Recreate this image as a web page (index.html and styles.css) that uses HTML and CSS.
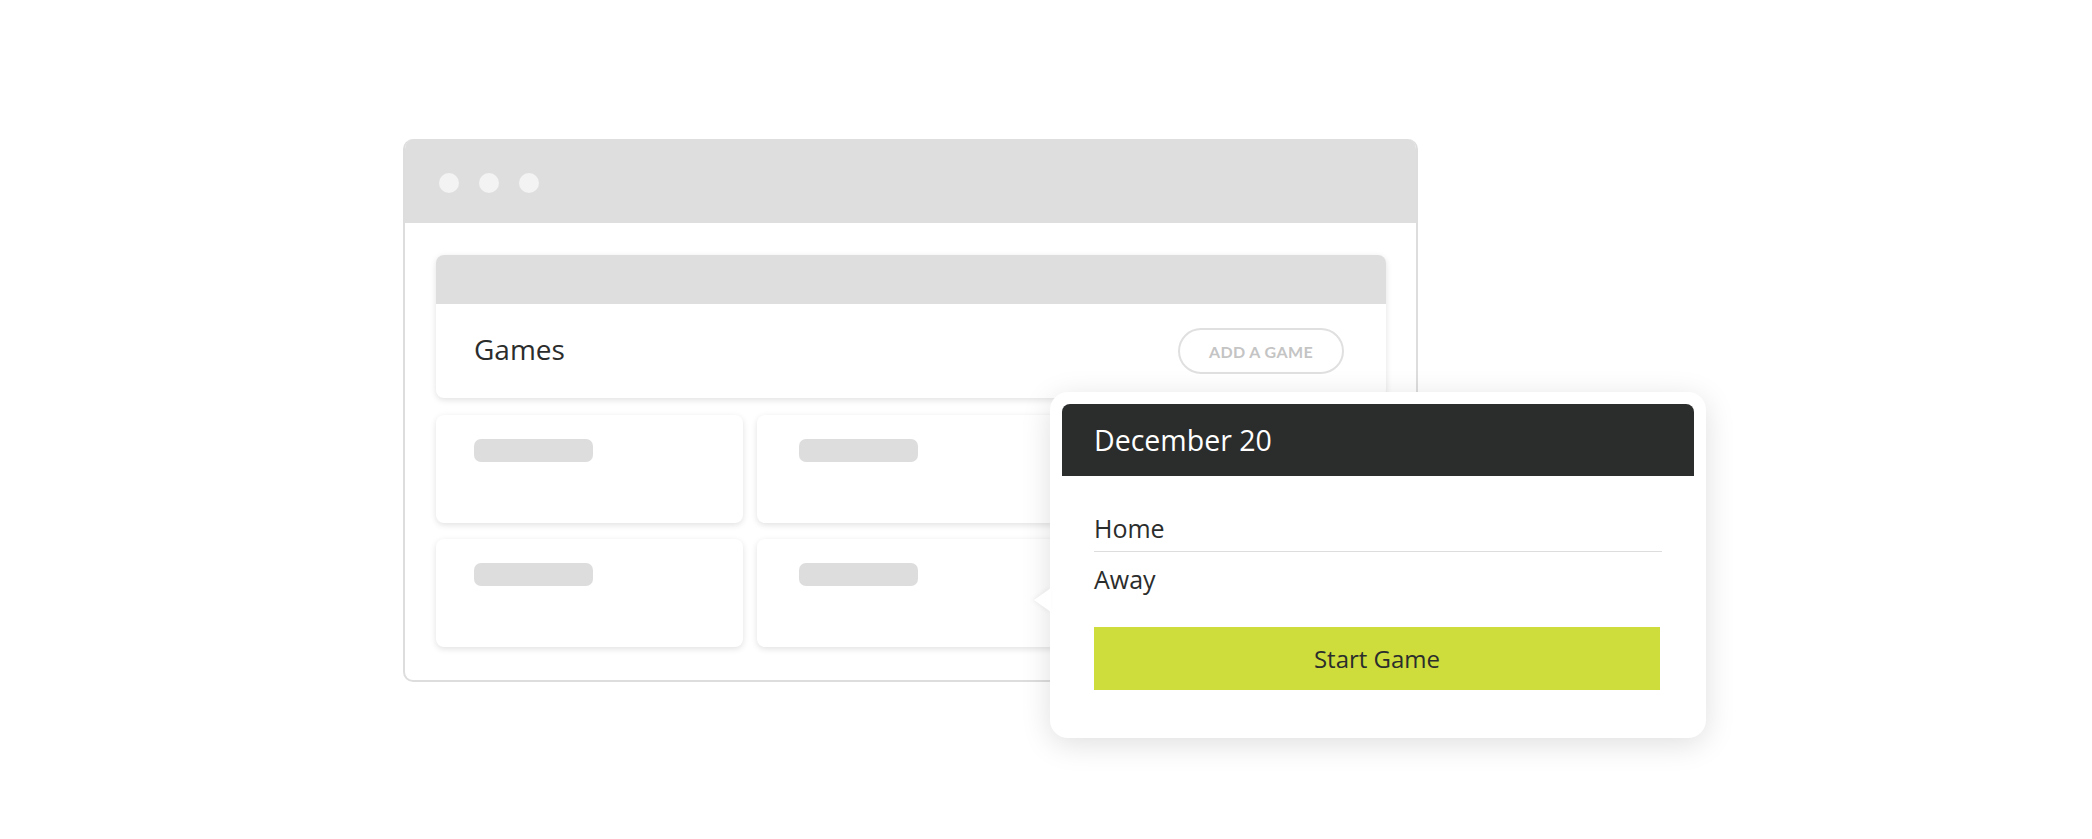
FILE: index.html
```html
<!DOCTYPE html>
<html lang="en">
<head>
<meta charset="utf-8">
<title>Games</title>
<link rel="stylesheet" href="styles.css">
</head>
<body>
<div class="stage">
  <div class="window">
    <div class="titlebar">
      <span class="dot"></span><span class="dot"></span><span class="dot"></span>
    </div>
    <div class="content">
      <div class="main-card">
        <div class="main-card-top"></div>
        <div class="main-card-body">
          <h1 class="title">Games</h1>
          <button class="add-btn">ADD A GAME</button>
        </div>
      </div>
      <div class="grid">
        <div class="game-card"><div class="bar"></div></div>
        <div class="game-card"><div class="bar"></div></div>
        <div class="game-card"><div class="bar"></div></div>
        <div class="game-card"><div class="bar"></div></div>
        <div class="game-card"><div class="bar"></div></div>
        <div class="game-card"><div class="bar"></div></div>
      </div>
    </div>
  </div>
  <div class="popup">
    <span class="arrow"></span>
    <div class="popup-head">December 20</div>
    <div class="popup-body">
      <div class="row row-line">Home</div>
      <div class="row row-away">Away</div>
      <button class="start-btn">Start Game</button>
    </div>
  </div>
</div>
</body>
</html>
```

FILE: styles.css
```css
* { box-sizing: border-box; }
html, body {
  margin: 0;
  background: #ffffff;
  font-family: "Open Sans", "Liberation Sans", sans-serif;
  color: #2b2d2c;
}
.stage {
  position: relative;
  width: 2092px;
  height: 839px;
  padding: 139px 0 0 403px;
}
.window {
  width: 1015px;
  height: 543px;
  border: 2px solid #dddddd;
  border-top: none;
  border-radius: 10px;
  overflow: hidden;
  background: #fff;
}
.titlebar {
  height: 84px;
  margin: 0 -2px;
  background: #dedede;
  display: flex;
  align-items: center;
  gap: 20px;
  padding-left: 36px;
  padding-top: 3px;
}
.dot {
  width: 20px;
  height: 20px;
  border-radius: 50%;
  background: #f3f3f3;
}
.content {
  padding: 32px 30px 0 31px;
}
.main-card {
  height: 143px;
  border-radius: 8px;
  overflow: hidden;
  background: #fff;
  box-shadow: 0 2px 6px rgba(0,0,0,0.12);
}
.main-card-top {
  height: 49px;
  background: #dedede;
}
.main-card-body {
  height: 94px;
  display: flex;
  align-items: center;
  justify-content: space-between;
  padding: 0 42px 5px 38px;
}
.title {
  margin: 0;
  font-size: 28px;
  font-weight: 400;
  color: #2b2d2c;
}
.add-btn {
  width: 166px;
  height: 46px;
  margin-top: 5px;
  border: 2px solid #e0e0e0;
  border-radius: 23px;
  background: #fff;
  color: #c4c4c4;
  font-family: "Lato", "Open Sans", sans-serif;
  font-weight: 700;
  font-size: 16px;
  letter-spacing: 0.4px;
  padding: 0;
}
.grid {
  margin-top: 17px;
  display: grid;
  grid-template-columns: repeat(3, 1fr);
  column-gap: 14px;
  row-gap: 16px;
}
.game-card {
  height: 108px;
  border-radius: 8px;
  background: #fff;
  box-shadow: 0 2px 6px rgba(0,0,0,0.12);
  padding: 24px 0 0 38px;
}
.game-card:nth-child(3n+2) {
  padding-left: 42px;
}
.bar {
  width: 119px;
  height: 23px;
  border-radius: 7px;
  background: #dddddd;
}
.popup {
  position: absolute;
  left: 1050px;
  top: 392px;
  width: 656px;
  height: 346px;
  background: #fff;
  border-radius: 18px;
  padding: 12px 12px 0 12px;
  box-shadow: 0 6px 30px rgba(0,0,0,0.13);
}
.arrow {
  position: absolute;
  left: -16px;
  top: 196px;
  width: 0;
  height: 0;
  border-top: 12px solid transparent;
  border-bottom: 12px solid transparent;
  border-right: 17px solid #ffffff;
  filter: drop-shadow(-2px 0 2px rgba(0,0,0,0.05));
}
.popup-head {
  height: 72px;
  background: #2b2d2c;
  border-radius: 8px 8px 0 0;
  color: #ffffff;
  font-size: 28.5px;
  display: flex;
  align-items: center;
  padding-left: 32px;
}
.popup-body {
  padding: 28px 32px 0 32px;
}
.row {
  font-size: 25px;
  height: 48px;
  display: flex;
  align-items: center;
}
.row-line {
  border-bottom: 1px solid #dddddd;
}
.row-away {
  padding-top: 4px;
  height: 50px;
}
.start-btn {
  display: block;
  margin-top: 25px;
  width: 566px;
  height: 63px;
  border: none;
  background: #cedd3c;
  color: #2b2d2c;
  font-family: "Open Sans", "Liberation Sans", sans-serif;
  font-size: 24px;
  padding: 0;
}
```
